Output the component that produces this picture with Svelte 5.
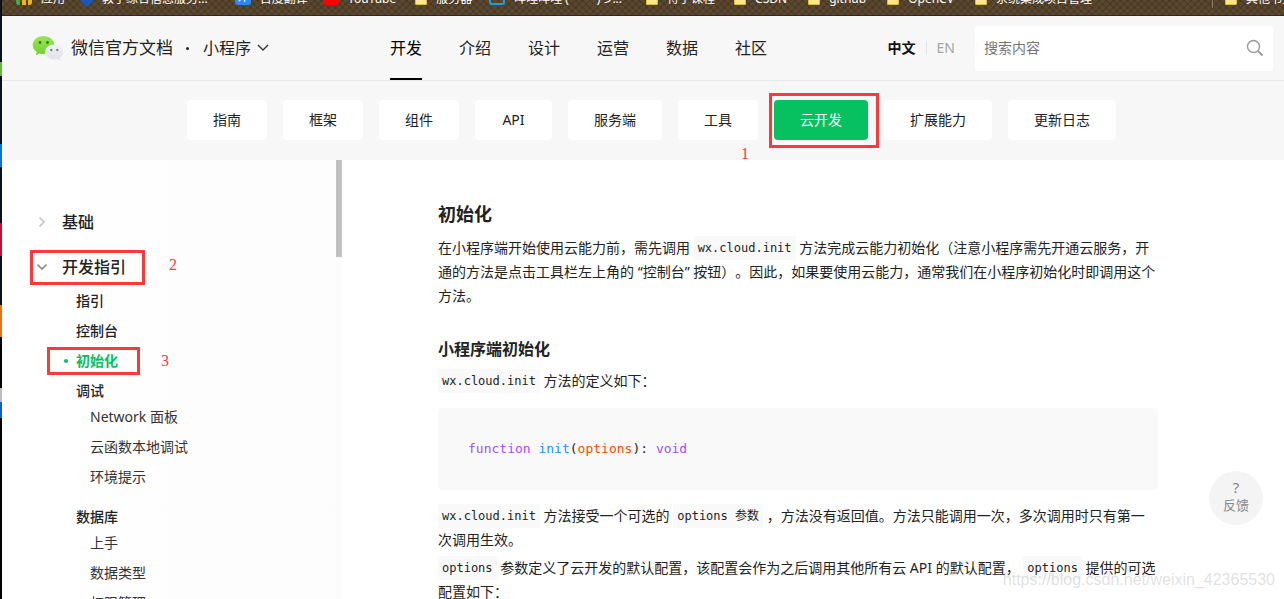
<script lang="ts">
  const bookmarks = [
    { label: "应用", icon: "apps", gap: 16 },
    { label: "教学综合信息服务...", icon: "school", gap: 27 },
    { label: "百度翻译", icon: "translate", gap: 15 },
    { label: "YouTube", icon: "youtube", gap: 19 },
    { label: "服务器", icon: "folder", gap: 17 },
    { label: "哔哩哔哩 (゜-゜)つ...", icon: "bili", gap: 24 },
    { label: "待学课程", icon: "folder", gap: 19 },
    { label: "CSDN", icon: "folder", gap: 21 },
    { label: "github", icon: "folder", gap: 21 },
    { label: "OpenCV", icon: "folder", gap: 21 },
    { label: "系统集成项目管理", icon: "folder", gap: 17 },
  ];

  const mainNav = ["开发", "介绍", "设计", "运营", "数据", "社区"];
  const tabs = ["指南", "框架", "组件", "API", "服务端", "工具", "云开发", "扩展能力", "更新日志"];

  const guide = [
    { title: "指引", children: [] },
    { title: "控制台", children: [] },
    { title: "初始化", children: [] },
    { title: "调试", children: ["Network 面板", "云函数本地调试", "环境提示"] },
    { title: "数据库", children: ["上手", "数据类型", "权限管理"] },
  ];

  let activeNav = "开发";
  let activeTab = "云开发";
  let activeDoc = "初始化";
  let guideOpen = true;
  let keyword = "";
</script>

<div class="screen">
  <div class="desktop-edge"></div>

  <div class="window">
    <div class="bookmarks">
      {#each bookmarks as b}
        <a href="#top" class="bookmark" style="margin-right: {b.gap}px">
          <span class="fav {b.icon}">
            {#if b.icon === "apps"}<i></i><i></i><i></i>{/if}
            {#if b.icon === "translate"}译{/if}
          </span>
          {b.label}
        </a>
      {/each}
      <a href="#top" class="bookmark other"><span class="fav folder"></span>其他书签</a>
    </div>

    <header class="header">
      <a href="#top" class="brand">
        <svg width="32" height="26" viewBox="0 0 32 26" aria-hidden="true">
          <defs>
            <linearGradient id="green" x1="0" y1="0" x2="0" y2="1">
              <stop offset="0" stop-color="#9be45a" />
              <stop offset="1" stop-color="#72cf2f" />
            </linearGradient>
            <linearGradient id="grey" x1="0" y1="0" x2="0" y2="1">
              <stop offset="0" stop-color="#f1f2f6" />
              <stop offset="1" stop-color="#dfe1e6" />
            </linearGradient>
          </defs>
          <path fill="url(#green)" d="M11.500 1C5.500 1 .7 5 .7 10c0 2.900 1.600 5.300 4.100 7l-1 3.300 3.700-1.900c1.300.4 2.600.6 4 .6 6 0 10.800-4 10.800-9S17.500 1 11.500 1z" />
          <circle cx="8" cy="7.500" r="1.400" fill="#2c7b1c" />
          <circle cx="15.500" cy="7.500" r="1.400" fill="#2c7b1c" />
          <path fill="url(#grey)" d="M22.300 9.500c-5 0-9.100 3.300-9.100 7.500s4.100 7.500 9.100 7.500c1.100 0 2.200-.2 3.200-.5l3 1.600-.8-2.700c2.100-1.400 3.500-3.500 3.500-5.900 0-4.200-4-7.500-8.900-7.500z" />
          <circle cx="19.300" cy="15" r="1.200" fill="#83868c" />
          <circle cx="25.300" cy="15" r="1.200" fill="#83868c" />
        </svg>
        <span class="brand-name">微信官方文档</span>
      </a>
      <span class="brand-dot"></span>
      <button type="button" class="product">
        小程序
        <svg width="12" height="8" viewBox="0 0 12 8" aria-hidden="true">
          <path d="M1 1l5 5 5-5" fill="none" stroke="#333" stroke-width="1.400" />
        </svg>
      </button>

      <nav class="main-nav">
        {#each mainNav as item}
          <a href="#top" class:active={item === activeNav} on:click|preventDefault={() => (activeNav = item)}>{item}</a>
        {/each}
      </nav>

      <div class="lang">
        <button type="button" class="on">中文</button>
        <button type="button">EN</button>
      </div>

      <form class="search" on:submit|preventDefault>
        <input type="text" bind:value={keyword} placeholder="搜索内容" aria-label="搜索内容" />
        <button type="submit" aria-label="搜索">
          <svg width="18" height="18" viewBox="0 0 18 18" aria-hidden="true">
            <circle cx="7.500" cy="7.500" r="6" fill="none" stroke="#999" stroke-width="1.400" />
            <path d="M12 12l4.500 4.500" stroke="#999" stroke-width="1.800" />
          </svg>
        </button>
      </form>
    </header>

    <nav class="tabs">
      {#each tabs as tab}
        <div class="tab-wrap">
          <button type="button" class="tab" class:active={tab === activeTab} on:click={() => (activeTab = tab)}>{tab}</button>
          {#if tab === "云开发"}
            <span class="mark mark-tab"></span>
            <span class="num num-tab">1</span>
          {/if}
        </div>
      {/each}
    </nav>

    <div class="body">
      <aside class="sidebar">
        <div class="menu">
          <button type="button" class="group">
            <svg width="12" height="12" viewBox="0 0 12 12" aria-hidden="true">
              <path d="M3.500 1.500L8 6l-4.500 4.500" fill="none" stroke="#c4c4c4" stroke-width="1.600" />
            </svg>
            基础
          </button>
          <button type="button" class="group" on:click={() => (guideOpen = !guideOpen)}>
            <svg width="12" height="12" viewBox="0 0 12 12" aria-hidden="true">
              <path d="M1.500 3.500L6 8l4.500-4.500" fill="none" stroke="#888" stroke-width="1.600" />
            </svg>
            开发指引
            <span class="mark mark-group"></span>
            <span class="num num-group">2</span>
          </button>
          {#if guideOpen}
            <ul class="docs">
              {#each guide as doc}
                <li>
                  <a href="#top" class="doc" class:active={doc.title === activeDoc} on:click|preventDefault={() => (activeDoc = doc.title)}>
                    {doc.title}
                    {#if doc.title === "初始化"}
                      <span class="mark mark-doc"></span>
                      <span class="num num-doc">3</span>
                    {/if}
                  </a>
                  {#if doc.children.length}
                    <ul class="sub">
                      {#each doc.children as child}
                        <li><a href="#top">{child}</a></li>
                      {/each}
                    </ul>
                  {/if}
                </li>
              {/each}
            </ul>
          {/if}
        </div>
        <div class="scrollbar"></div>
      </aside>

      <main class="content">
        <h1>初始化</h1>
        <p>
          在小程序端开始使用云能力前，需先调用 <code>wx.cloud.init</code> 方法完成云能力初始化（注意小程序需先开通云服务，开通的方法是点击工具栏左上角的 “控制台” 按钮）。因此，如果要使用云能力，通常我们在小程序初始化时即调用这个方法。
        </p>
        <h2>小程序端初始化</h2>
        <p><code>wx.cloud.init</code> 方法的定义如下：</p>
        <pre><span class="kw">function</span> <span class="fn">init</span>(<span class="arg">options</span>): <span class="kw">void</span></pre>
        <p>
          <code>wx.cloud.init</code> 方法接受一个可选的 <code>options 参数</code> ，方法没有返回值。方法只能调用一次，多次调用时只有第一次调用生效。
        </p>
        <p>
          <code>options</code> 参数定义了云开发的默认配置，该配置会作为之后调用其他所有云 API 的默认配置， <code>options</code> 提供的可选配置如下：
        </p>
      </main>
    </div>
  </div>

  <button type="button" class="feedback"><span>?</span>反馈</button>
  <span class="watermark">https://blog.csdn.net/weixin_42365530</span>
</div>

<style>
  :global(body) {
    margin: 0;
    background: #fff;
    color: #222;
    font-family: "Noto Sans", "Noto Sans CJK SC", sans-serif;
    font-size: 14px;
  }

  :global(*) {
    box-sizing: border-box;
  }

  a {
    color: inherit;
    text-decoration: none;
  }

  button {
    border: none;
    background: none;
    padding: 0;
    color: inherit;
    font: inherit;
    cursor: pointer;
  }

  ul {
    list-style: none;
    margin: 0;
    padding: 0;
  }

  .screen {
    position: relative;
    display: flex;
    height: 100vh;
    overflow: hidden;
  }

  .desktop-edge {
    flex: 0 0 2px;
    background: linear-gradient(
      #0a1020 62px, #69b53c 62px, #69b53c 76px, #0a1020 76px, #0a1020 144px,
      #0a74d8 144px, #0a74d8 167px, #0a1020 167px, #0a1020 223px,
      #c8102e 223px, #c8102e 256px, #0a1020 256px, #0a1020 305px,
      #e8730c 305px, #e8730c 337px, #000 337px, #000 388px,
      #b9bcc4 388px, #b9bcc4 402px, #0a62c8 402px, #0a62c8 418px, #000 418px
    );
  }

  .window {
    flex: 1;
    min-width: 0;
    display: flex;
    flex-direction: column;
  }

  .bookmarks {
    flex: none;
    display: flex;
    align-items: flex-end;
    height: 16px;
    padding: 0 0 7px 14px;
    overflow: hidden;
    border-bottom: 1px solid #3a2618;
    background:
      repeating-linear-gradient(45deg, rgba(40, 26, 12, 0.18) 0 2px, transparent 2px 5px),
      repeating-linear-gradient(-45deg, rgba(40, 26, 12, 0.18) 0 2px, transparent 2px 5px),
      #5a4830;
  }

  .bookmark {
    flex: none;
    display: flex;
    align-items: flex-end;
    gap: 9px;
    color: #fff;
    font-size: 12px;
    line-height: 18px;
    white-space: nowrap;
  }

  .bookmark.other {
    margin-left: auto;
    margin-right: -10px;
    padding-left: 12px;
    border-left: 1px solid #8a7a62;
  }

  .fav {
    width: 16px;
    height: 16px;
    margin-bottom: 3px;
    border-radius: 3px;
    overflow: hidden;
    text-align: center;
    line-height: 16px;
  }

  .fav.folder {
    width: 12px;
    height: 14px;
    border: 1px solid #e5bd3e;
    border-radius: 1px;
    background: #ffe594;
  }

  .fav.apps {
    display: flex;
    justify-content: space-between;
  }

  .fav.apps i {
    width: 4px;
    background: #3fa957;
  }

  .fav.apps i + i {
    background: #f3b41b;
  }

  .fav.school {
    width: 12px;
    height: 12px;
    background: #1857b8;
    transform: rotate(45deg);
  }

  .fav.translate {
    background: #2a87f5;
  }

  .fav.youtube {
    background: #f00;
  }

  .fav.bili {
    border: 2px solid #18a0dc;
  }

  .header {
    flex: none;
    display: flex;
    align-items: center;
    height: 65px;
    padding: 0 11px 0 30px;
    border-bottom: 1px solid #e7e7e7;
    background: #f7f7f7;
    font-size: 16px;
    line-height: 20px;
  }

  .brand {
    display: flex;
    align-items: center;
    gap: 7px;
  }

  .brand-name {
    font-size: 17px;
  }

  .brand-dot {
    width: 3px;
    height: 3px;
    margin: 0 14px 0 13px;
    border-radius: 50%;
    background: #222;
  }

  .product {
    display: flex;
    align-items: center;
    gap: 6px;
  }

  .main-nav {
    display: flex;
    align-self: stretch;
    gap: 37px;
    margin-left: 121px;
  }

  .main-nav a {
    display: flex;
    align-items: center;
    height: 64px;
    border-top: 2px solid transparent;
    border-bottom: 2px solid transparent;
  }

  .main-nav a.active {
    color: #000;
    border-bottom-color: #000;
  }

  .lang {
    display: flex;
    align-items: center;
    margin-left: auto;
    margin-right: 20px;
    font-size: 14px;
    line-height: 14px;
    color: #a5a5a5;
  }

  .lang button + button {
    margin-left: 10px;
    padding-left: 10px;
    border-left: 1px solid #e5e5e5;
  }

  .lang .on {
    color: #111;
    font-weight: 700;
  }

  .search {
    display: flex;
    align-items: center;
    width: 298px;
    height: 45px;
    padding: 0 9px;
    border-radius: 3px;
    background: #fff;
  }

  .search input {
    flex: 1;
    min-width: 0;
    border: none;
    outline: none;
    padding: 0;
    background: none;
    font: inherit;
    font-size: 14px;
  }

  .search input::placeholder {
    color: #757575;
  }

  .search button {
    display: flex;
  }

  .tabs {
    flex: none;
    display: flex;
    align-items: flex-start;
    gap: 16px;
    padding: 19px 0 20px 185px;
    background: #f7f7f7;
  }

  .tab-wrap {
    position: relative;
  }

  .tab {
    display: block;
    min-width: 77px;
    padding: 10px 26px;
    border-radius: 4px;
    background: #fff;
    line-height: 20px;
    white-space: nowrap;
  }

  .tab.active {
    background: #07c160;
    color: #fff;
  }

  /* red tutorial annotations */
  .mark {
    position: absolute;
    border: 3px solid #fa3a3a;
    pointer-events: none;
  }

  .num {
    position: absolute;
    color: #fa3a3a;
    font-family: "Liberation Serif", serif;
    font-size: 16px;
    font-weight: 400;
    line-height: 16px;
  }

  .mark-tab {
    top: -7px;
    left: -5px;
    width: 110px;
    height: 55px;
  }

  .num-tab {
    top: 46px;
    left: -33px;
  }

  .mark-group {
    top: -5px;
    left: 0;
    width: 115px;
    height: 35px;
  }

  .num-group {
    top: 2px;
    left: 139px;
  }

  .mark-doc {
    top: -3px;
    left: -29px;
    width: 93px;
    height: 28px;
  }

  .num-doc {
    top: 3px;
    left: 85px;
  }

  .body {
    flex: 1;
    min-height: 0;
    display: flex;
  }

  .sidebar {
    flex: 0 0 340px;
    display: flex;
    justify-content: space-between;
    overflow: hidden;
    background: linear-gradient(90deg, #fff, #fcfcfc);
  }

  .menu {
    flex: 1;
    padding: 50px 0 0 28px;
  }

  .group {
    position: relative;
    display: flex;
    align-items: center;
    gap: 14px;
    width: 100%;
    height: 24px;
    margin-bottom: 21px;
    padding: 0 0 0 6px;
    font-size: 16px;
    font-weight: 500;
    line-height: 22px;
  }

  .docs {
    display: flex;
    flex-direction: column;
    gap: 8px;
    margin-top: -10px;
    padding-left: 46px;
    line-height: 22px;
  }

  .doc {
    position: relative;
    display: block;
    font-weight: 500;
  }

  .doc.active {
    color: #07c160;
    font-weight: 700;
  }

  .doc.active::before {
    content: "";
    position: absolute;
    top: 9px;
    left: -12px;
    width: 4px;
    height: 4px;
    border-radius: 50%;
    background: #07c160;
  }

  .sub {
    display: flex;
    flex-direction: column;
    gap: 8px;
    padding: 4px 0 10px 14px;
    color: #333;
  }

  .scrollbar {
    flex: 0 0 6px;
    height: 97px;
    background: #c1c1c1;
  }

  .content {
    flex: 0 1 816px;
    padding: 42px 0 0 96px;
    line-height: 24px;
    text-spacing-trim: space-all;
  }

  h1,
  h2,
  p,
  pre {
    margin: 0;
  }

  h1 {
    margin-bottom: 10px;
    font-size: 18px;
    line-height: 24px;
  }

  h2 {
    margin: 29px 0 8px;
    font-size: 16px;
    line-height: 24px;
  }

  p + p {
    margin-top: 4px;
  }

  code,
  pre {
    font-family: "DejaVu Sans Mono", "Noto Sans CJK SC", monospace;
    background: #f9f9f9;
  }

  code {
    display: inline-block;
    padding: 0 4px;
    border-radius: 2px;
    font-size: 12px;
    line-height: 24px;
    vertical-align: top;
  }

  pre {
    margin: 15px 0 14px;
    padding: 29px 30px;
    border-radius: 4px;
    font-size: 13px;
    line-height: 24px;
  }

  .kw {
    color: #a84bf5;
  }

  .fn {
    color: #1a90ff;
  }

  .arg {
    color: #ff4a00;
  }

  .feedback {
    position: absolute;
    right: 21px;
    bottom: 74px;
    width: 54px;
    height: 54px;
    padding-bottom: 4px;
    border-radius: 50%;
    background: #f4f4f4;
    color: #888;
    font-size: 13px;
    line-height: 18px;
  }

  .feedback span {
    display: block;
    font-size: 15px;
  }

  .watermark {
    position: absolute;
    right: 9px;
    bottom: 9px;
    color: rgba(150, 150, 150, 0.3);
    font-family: "Liberation Sans", sans-serif;
    font-size: 16px;
    line-height: 20px;
    pointer-events: none;
  }
</style>
